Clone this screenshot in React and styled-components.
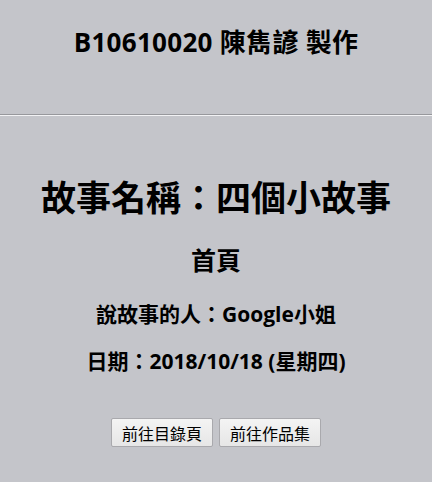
import React from 'react';
import styled, { createGlobalStyle } from 'styled-components';

const GlobalStyle = createGlobalStyle`
  html, body {
    margin: 0;
    background: #c4c5ca;
  }
  body {
    font-family: "Open Sans", "Noto Sans CJK TC", sans-serif;
    color: #000;
  }
`;

const Page = styled.div`
  width: 432px;
  min-height: 482px;
  background: #c4c5ca;
`;

const Header = styled.header`
  height: 114px;
  box-sizing: border-box;
  padding-top: 22px;
  text-align: center;
`;

const Maker = styled.h1`
  margin: 0;
  font-size: 26px;
  line-height: 40px;
  font-weight: 700;
  letter-spacing: 0.3px;
`;

const Divider = styled.hr`
  margin: 0;
  height: 0;
  border: none;
  border-top: 1px solid #97989c;
  border-bottom: 1px solid #f2f2f4;
`;

const Main = styled.main`
  display: flex;
  flex-direction: column;
  align-items: center;
  padding-top: 58px;
  text-align: center;
`;

const Title = styled.h2`
  margin: 0;
  font-size: 35px;
  line-height: 48px;
  font-weight: 700;
`;

const Line = styled.p`
  margin: ${p => p.$gap}px 0 0;
  font-size: ${p => p.$size}px;
  line-height: ${p => p.$lh}px;
  font-weight: 700;
`;

const Buttons = styled.div`
  display: flex;
  gap: 6px;
  margin-top: 42px;
`;

const Button = styled.button`
  height: 29px;
  padding: 0 10px;
  font-family: "Open Sans", "Noto Sans CJK TC", sans-serif;
  font-size: 16px;
  color: #000;
  background: linear-gradient(#f4f4f4, #e6e6e6);
  border: 1px solid #a9a9ad;
  border-radius: 2px;
  cursor: pointer;
`;

export default function App() {
  return (
    <Page>
      <GlobalStyle />
      <Header>
        <Maker>B10610020 陳雋諺 製作</Maker>
      </Header>
      <Divider />
      <Main>
        <Title>故事名稱：四個小故事</Title>
        <Line $gap={20} $size={25} $lh={36}>首頁</Line>
        <Line $gap={21} $size={21} $lh={30}>說故事的人：Google小姐</Line>
        <Line $gap={17} $size={21} $lh={30}>日期：2018/10/18 (星期四)</Line>
        <Buttons>
          <Button>前往目錄頁</Button>
          <Button>前往作品集</Button>
        </Buttons>
      </Main>
    </Page>
  );
}
